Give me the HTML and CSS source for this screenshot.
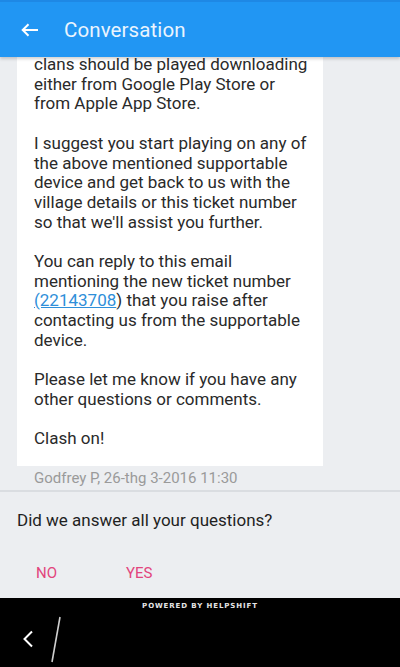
FILE: index.html
```html
<!DOCTYPE html>
<html lang="en">
<head>
<meta charset="utf-8">
<title>Conversation</title>
<link rel="stylesheet" href="styles.css">
</head>
<body>
<div class="app">
  <header class="topbar">
    <svg class="back" width="18" height="14" viewBox="0 0 18 14" aria-hidden="true">
      <path d="M17 7H2M7.5 1.2L1.7 7l5.8 5.8" fill="none" stroke="#fff" stroke-width="2"/>
    </svg>
    <h1 class="title">Conversation</h1>
  </header>
  <main class="messages">
    <div class="thread">
      <div class="card">
        <p>Clash of Clans is supported on iOS and Android devices only. The game and<br>clans should be played downloading either from Google Play Store or from Apple App Store.</p>
        <p>I suggest you start playing on any of the above mentioned supportable device and get back to us with the village details or this ticket number so that we'll assist you further.</p>
        <p>You can reply to this email mentioning the new ticket number <a class="ticket" href="#">(22143708</a>) that you raise after contacting us from the supportable device.</p>
        <p>Please let me know if you have any other questions or comments.</p>
        <p class="last">Clash on!</p>
      </div>
      <div class="meta">Godfrey P, 26-thg 3-2016 11:30</div>
    </div>
  </main>
  <section class="feedback">
    <div class="question">Did we answer all your questions?</div>
    <div class="actions">
      <button class="action no">NO</button>
      <button class="action yes">YES</button>
    </div>
  </section>
  <footer class="footer">
    <div class="powered">POWERED BY HELPSHIFT</div>
    <div class="nav">
      <svg class="chev" width="12" height="18" viewBox="0 0 12 18" aria-hidden="true">
        <path d="M10 1.5L2.5 9l7.5 7.5" fill="none" stroke="#fff" stroke-width="2"/>
      </svg>
      <svg class="slash" width="12" height="48" viewBox="0 0 12 48" aria-hidden="true">
        <path d="M10 1L2 46" fill="none" stroke="#cfcfcf" stroke-width="1.6"/>
      </svg>
    </div>
  </footer>
</div>
</body>
</html>
```

FILE: styles.css
```css
* { box-sizing: border-box; }
html, body { margin: 0; padding: 0; }
body {
  background: #eceef1;
  font-family: Roboto, "Noto Sans", "Liberation Sans", sans-serif;
}
.app {
  width: 400px;
  height: 667px;
  display: flex;
  flex-direction: column;
  overflow: hidden;
}
.topbar {
  flex: 0 0 57px;
  background: #2196f3;
  border-top: 2px solid #1e88e5;
  display: flex;
  align-items: center;
  padding-left: 21px;
  gap: 25px;
  position: relative;
  z-index: 2;
  box-shadow: 0 2px 3px rgba(0,0,0,0.18);
}
.back { display: block; flex: none; }
.title {
  margin: 0;
  font-weight: 400;
  font-size: 20.5px;
  color: #eaf4fe;
  letter-spacing: 0.1px;
}
.messages {
  flex: 1 1 auto;
  display: flex;
  flex-direction: column;
  justify-content: flex-end;
  overflow: hidden;
  border-bottom: 2px solid #dadde1;
}
.thread {
  flex: none;
  padding: 0 0 3px 17px;
}
.card {
  width: 306px;
  background: #fff;
  padding: 0 10px 17px 17px;
  color: #2a2a2a;
  font-size: 17px;
  line-height: 19.7px;
}
.card p { margin: 0 0 19.7px; }
.card p.last { margin-bottom: 0; }
.ticket {
  color: #2f8fd9;
  text-decoration: underline;
}
.meta {
  padding: 3px 0 0 17px;
  color: #9a9a9a;
  font-size: 15px;
  line-height: 18px;
}
.feedback {
  flex: 0 0 106px;
  padding: 18px 17px 0 17px;
  display: flex;
  flex-direction: column;
}
.question {
  font-size: 17px;
  color: #1f1f1f;
  line-height: 20px;
}
.actions {
  display: flex;
  margin-top: 34px;
  padding-left: 19px;
  gap: 69px;
}
.action {
  border: 0;
  background: none;
  padding: 0;
  font-family: inherit;
  font-size: 15px;
  color: #e2457d;
  line-height: 18px;
}
.footer {
  flex: 0 0 69px;
  background: #000;
  display: flex;
  flex-direction: column;
}
.powered {
  text-align: center;
  color: #e6e6e6;
  font-family: "DejaVu Sans", sans-serif;
  font-weight: bold;
  font-size: 7px;
  letter-spacing: 0.9px;
  line-height: 10px;
  padding-top: 3px;
}
.nav {
  display: flex;
  align-items: flex-start;
  padding-left: 22px;
  gap: 16px;
}
.chev { display: block; margin-top: 19px; }
.slash { display: block; margin-top: 5px; }
```
